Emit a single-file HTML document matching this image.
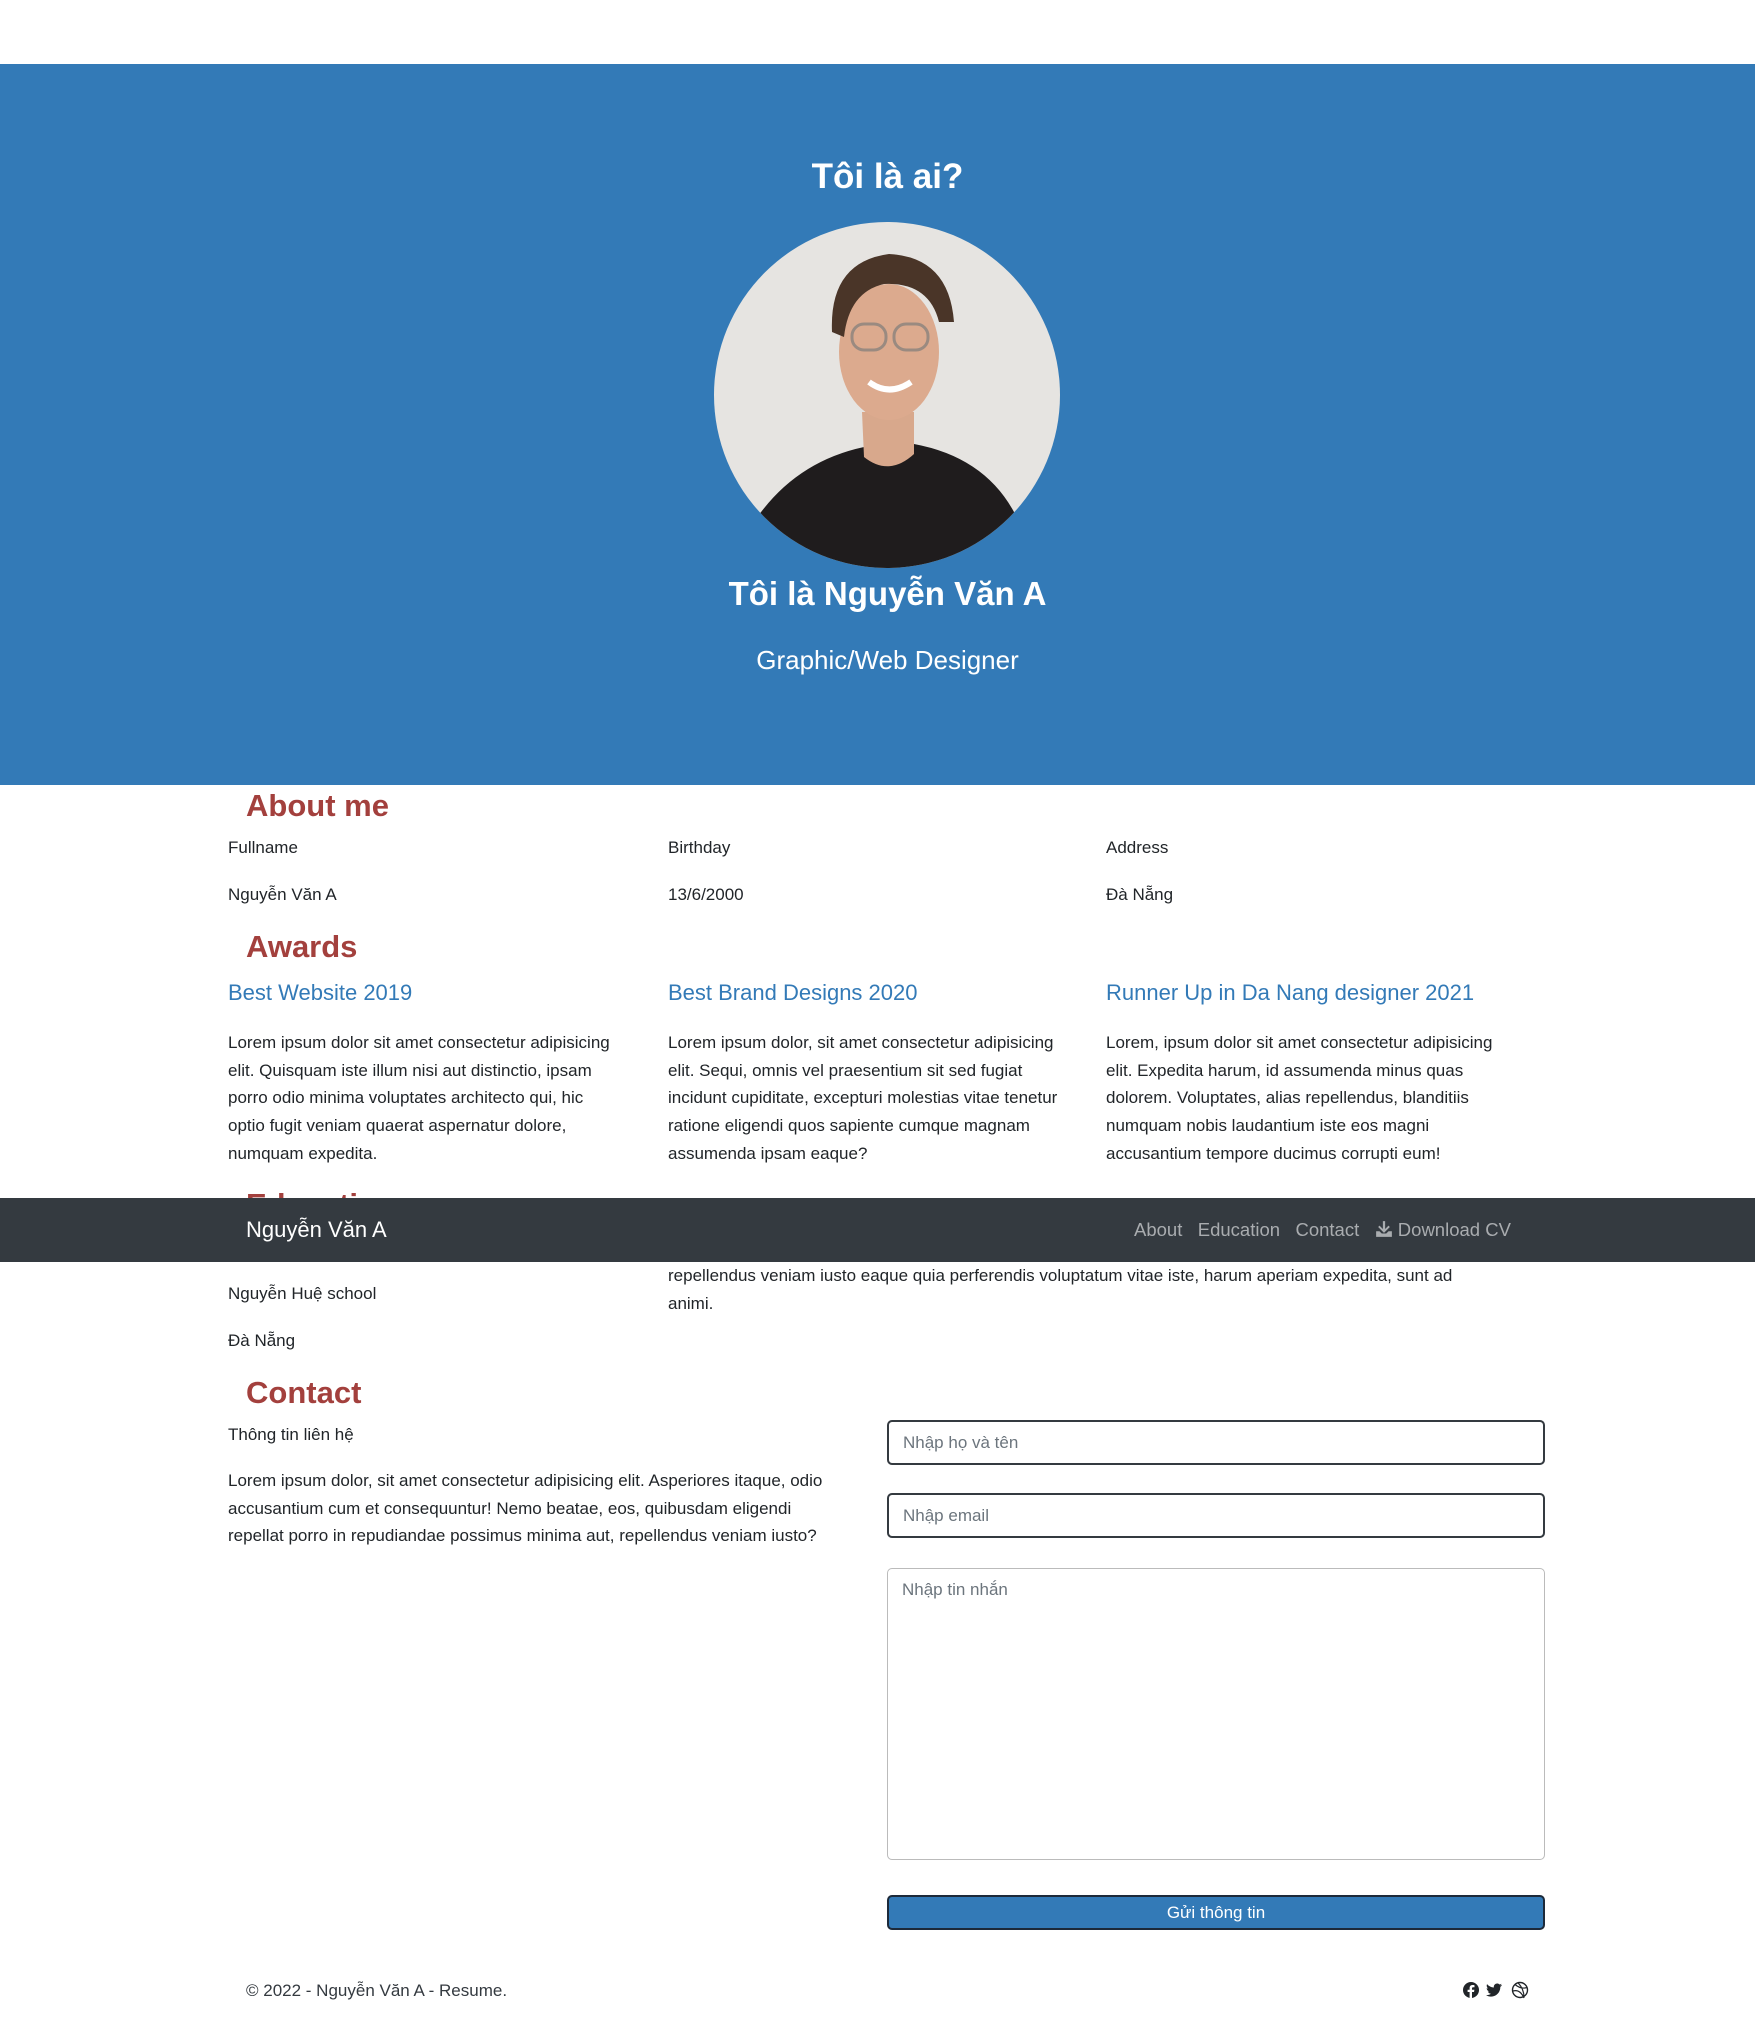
<!DOCTYPE html>
<html><head><meta charset="utf-8"><style>
*{margin:0;padding:0;box-sizing:border-box}
body{width:1755px;height:2022px;position:relative;background:#fff;font-family:"Liberation Sans",sans-serif;color:#212529;overflow:hidden}
.a{position:absolute;white-space:nowrap}
.h{color:#a3403d;font-weight:bold;font-size:31px}
.t{font-size:17px}
.p{font-size:17px;line-height:27.7px}
.aw{color:#337ab7;font-size:22px}
.in{position:absolute;left:887px;width:658px;border:2px solid #343a40;border-radius:5px;color:#6c757d;font-size:17px;padding-left:14px}
.c{left:20px;width:1735px;text-align:center}
</style></head><body>
<div class="a" style="left:0;top:64px;width:1755px;height:721px;background:#337ab7"></div>
<div class="a c" style="top:157px;color:#fff;font-weight:bold;font-size:35px">Tôi là ai?</div>
<svg class="a" style="left:714px;top:222px" width="346" height="346" viewBox="0 0 346 346">
<defs><clipPath id="c"><circle cx="173" cy="173" r="173"/></clipPath></defs>
<g clip-path="url(#c)">
<rect width="346" height="346" fill="#e6e4e1"/>
<path d="M40 300 Q80 240 150 225 L200 222 Q270 235 300 290 L346 346 L0 346Z" fill="#1f1c1d"/>
<path d="M148 190 L150 235 Q175 255 200 232 L200 190Z" fill="#d8a88c"/>
<ellipse cx="175" cy="130" rx="50" ry="68" fill="#dcaa8e"/>
<path d="M118 110 Q115 40 175 32 Q235 35 240 100 L225 100 Q215 60 170 62 Q135 70 130 115Z" fill="#4a3528"/>
<rect x="138" y="102" width="34" height="26" rx="12" fill="none" stroke="#9a8a80" stroke-width="3"/>
<rect x="180" y="102" width="34" height="26" rx="12" fill="none" stroke="#9a8a80" stroke-width="3"/>
<path d="M155 160 Q175 175 197 160" stroke="#fff" stroke-width="6" fill="none"/>
</g></svg>
<div class="a c" style="top:575px;color:#fff;font-weight:bold;font-size:33px">Tôi là Nguyễn Văn A</div>
<div class="a c" style="top:645px;color:#fff;font-size:26px">Graphic/Web Designer</div>

<div class="a h" style="left:246px;top:788px">About me</div>
<div class="a t" style="left:228px;top:838px">Fullname</div>
<div class="a t" style="left:668px;top:838px">Birthday</div>
<div class="a t" style="left:1106px;top:838px">Address</div>
<div class="a t" style="left:228px;top:885px">Nguyễn Văn A</div>
<div class="a t" style="left:668px;top:885px">13/6/2000</div>
<div class="a t" style="left:1106px;top:885px">Đà Nẵng</div>

<div class="a h" style="left:246px;top:929px">Awards</div>
<div class="a aw" style="left:228px;top:980px">Best Website 2019</div>
<div class="a aw" style="left:668px;top:980px">Best Brand Designs 2020</div>
<div class="a aw" style="left:1106px;top:980px">Runner Up in Da Nang designer 2021</div>
<div class="a p" style="left:228px;top:1029px">Lorem ipsum dolor sit amet consectetur adipisicing<br>elit. Quisquam iste illum nisi aut distinctio, ipsam<br>porro odio minima voluptates architecto qui, hic<br>optio fugit veniam quaerat aspernatur dolore,<br>numquam expedita.</div>
<div class="a p" style="left:668px;top:1029px">Lorem ipsum dolor, sit amet consectetur adipisicing<br>elit. Sequi, omnis vel praesentium sit sed fugiat<br>incidunt cupiditate, excepturi molestias vitae tenetur<br>ratione eligendi quos sapiente cumque magnam<br>assumenda ipsam eaque?</div>
<div class="a p" style="left:1106px;top:1029px">Lorem, ipsum dolor sit amet consectetur adipisicing<br>elit. Expedita harum, id assumenda minus quas<br>dolorem. Voluptates, alias repellendus, blanditiis<br>numquam nobis laudantium iste eos magni<br>accusantium tempore ducimus corrupti eum!</div>

<div class="a h" style="left:246px;top:1187px">Education</div>
<div class="a p" style="left:668px;top:1262px">repellendus veniam iusto eaque quia perferendis voluptatum vitae iste, harum aperiam expedita, sunt ad<br>animi.</div>
<div class="a" style="left:0;top:1198px;width:1755px;height:64px;background:#343a40"></div>
<div class="a" style="left:246px;top:1217px;color:#fff;font-size:22px">Nguyễn Văn A</div>
<div class="a" style="left:1134px;top:1219px;color:#a9acaf;font-size:18.5px">About&nbsp;&nbsp;&nbsp;Education&nbsp;&nbsp;&nbsp;Contact&nbsp;&nbsp;&nbsp;<svg width="18" height="18" viewBox="0 0 16 16" style="vertical-align:-2px"><path d="M7 1h2v7l3-3 1.2 1.2L8 11.4 2.8 6.2 4 5l3 3z M1 10h3l2 2h4l2-2h3v5H1z" fill="#a9acaf"/></svg> Download CV</div>
<div class="a t" style="left:228px;top:1284px">Nguyễn Huệ school</div>
<div class="a t" style="left:228px;top:1331px">Đà Nẵng</div>

<div class="a h" style="left:246px;top:1375px">Contact</div>
<div class="a t" style="left:228px;top:1425px">Thông tin liên hệ</div>
<div class="a p" style="left:228px;top:1467px">Lorem ipsum dolor, sit amet consectetur adipisicing elit. Asperiores itaque, odio<br>accusantium cum et consequuntur! Nemo beatae, eos, quibusdam eligendi<br>repellat porro in repudiandae possimus minima aut, repellendus veniam iusto?</div>
<div class="in" style="top:1420px;height:45px;line-height:41px">Nhập họ và tên</div>
<div class="in" style="top:1493px;height:45px;line-height:41px">Nhập email</div>
<div class="in" style="top:1568px;height:292px;padding-top:11px;border:1px solid #bbb">Nhập tin nhắn</div>
<div class="a" style="left:887px;top:1895px;width:658px;height:35px;background:#337ab7;border:2px solid #1d2a3a;border-radius:5px;color:#fff;text-align:center;font-size:17px;line-height:31px">Gửi thông tin</div>
<div class="a t" style="left:246px;top:1981px;color:#343a40">© 2022 - Nguyễn Văn A - Resume.</div>
<svg class="a" style="left:1462px;top:1980px" width="68" height="20" viewBox="0 0 68 20">
<circle cx="9" cy="10" r="8" fill="#212529"/><path d="M10 18v-6h2l.4-2.3H10V8.3c0-.7.3-1.1 1.2-1.1h1.3V5.2c-.5-.1-1.2-.2-1.9-.2-1.9 0-3 1.1-3 3.1v1.6H5.6V12h2v6z" fill="#fff"/>
<path d="M40 5c-.6.3-1.2.4-1.9.5.7-.4 1.2-1 1.4-1.8-.6.4-1.3.6-2 .8-.6-.7-1.5-1-2.4-1-1.8 0-3.3 1.5-3.300 3.3 0 .3 0 .5.1.7-2.700-.1-5.200-1.4-6.800-3.4-.3.5-.4 1-.4 1.6 0 1.1.6 2.1 1.5 2.8-.5 0-1-.2-1.5-.4 0 1.6 1.1 2.9 2.6 3.2-.5.1-1 .2-1.5.1.4 1.3 1.6 2.3 3.1 2.3-1.1.9-2.6 1.4-4.1 1.4h-.8c1.5.9 3.2 1.5 5 1.5 6 0 9.3-5 9.3-9.3v-.4c.7-.5 1.2-1.1 1.7-1.7z" fill="#212529"/>
<circle cx="58" cy="10" r="7.5" fill="none" stroke="#212529" stroke-width="1.4"/><path d="M53 4.5q6 5 12 3M51 11q7-2 11 7M56 2.8q6 6 6 14.5" stroke="#212529" stroke-width="1.2" fill="none"/>
</svg>
</body></html>
